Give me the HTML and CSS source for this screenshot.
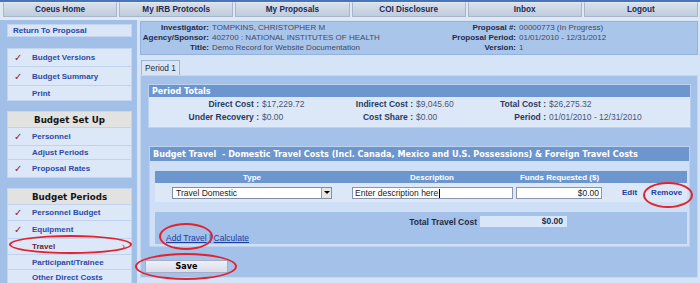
FILE: index.html
```html
<!DOCTYPE html>
<html lang="en">
<head>
<meta charset="utf-8">
<title>Budget Travel</title>
<link rel="stylesheet" href="styles.css">
</head>
<body>
<nav class="topnav">
  <a class="tab">Coeus Home</a>
  <a class="tab">My IRB Protocols</a>
  <a class="tab">My Proposals</a>
  <a class="tab">COI Disclosure</a>
  <a class="tab">Inbox</a>
  <a class="tab">Logout</a>
</nav>
<div class="page">
  <aside class="sidebar">
    <div class="sbox return"><a class="return-link">Return To Proposal</a></div>
    <div class="sbox">
      <a class="item check h17">Budget Versions</a>
      <a class="item check h19">Budget Summary</a>
      <a class="item h15">Print</a>
    </div>
    <div class="sbox">
      <div class="shead">Budget Set Up</div>
      <a class="item check h18">Personnel</a>
      <a class="item h14">Adjust Periods</a>
      <a class="item check h18">Proposal Rates</a>
    </div>
    <div class="sbox">
      <div class="shead">Budget Periods</div>
      <a class="item check h16">Personnel Budget</a>
      <a class="item check h18">Equipment</a>
      <a class="item current h16">Travel<span class="arrow">›</span></a>
      <a class="item h15">Participant/Trainee</a>
      <a class="item h16">Other Direct Costs</a>
    </div>
  </aside>
  <main class="main">
    <div class="info">
      <span class="lbl">Investigator:</span><span class="val">TOMPKINS, CHRISTOPHER M</span>
      <span class="lbl">Proposal #:</span><span class="val">00000773 (In Progress)</span>
      <span class="lbl">Agency/Sponsor:</span><span class="val">402700 : NATIONAL INSTITUTES OF HEALTH</span>
      <span class="lbl">Proposal Period:</span><span class="val">01/01/2010 - 12/31/2012</span>
      <span class="lbl">Title:</span><span class="val">Demo Record for Website Documentation</span>
      <span class="lbl">Version:</span><span class="val">1</span>
    </div>
    <div class="ptabs"><span class="ptab">Period 1</span></div>
    <div class="panel">
      <section class="totals">
        <h3 class="box-head">Period Totals</h3>
        <div class="totals-body">
          <span class="tl">Direct Cost :</span><span class="tv">$17,229.72</span>
          <span class="tl">Indirect Cost :</span><span class="tv">$9,045.60</span>
          <span class="tl">Total Cost :</span><span class="tv">$26,275.32</span>
          <span class="tl">Under Recovery :</span><span class="tv">$0.00</span>
          <span class="tl">Cost Share :</span><span class="tv">$0.00</span>
          <span class="tl">Period :</span><span class="tv">01/01/2010 - 12/31/2010</span>
        </div>
      </section>
      <section class="travel">
        <h3 class="box-head tall">Budget Travel&nbsp; - Domestic Travel Costs (Incl. Canada, Mexico and U.S. Possessions) &amp; Foreign Travel Costs</h3>
        <div class="travel-body">
          <div class="tgrid thead">
            <span>Type</span><span>Description</span><span>Funds Requested ($)</span><span></span>
          </div>
          <div class="tgrid trow">
            <div class="cell"><div class="select"><span class="sel-text">Travel Domestic</span><span class="sel-btn"><span class="tri"></span></span></div></div>
            <div class="cell"><div class="field desc">Enter description here<span class="caret"></span></div></div>
            <div class="cell"><div class="field funds">$0.00</div></div>
            <div class="actions"><a>Edit</a><a>Remove</a></div>
          </div>
          <div class="sum">
            <div class="sum-row"><span class="sum-lbl">Total Travel Cost</span><span class="sum-val">$0.00</span></div>
            <div class="links"><a>Add Travel</a> | <a>Calculate</a></div>
          </div>
        </div>
      </section>
      <button class="save">Save</button>
    </div>
  </main>
</div>
<div class="mark m-travel"></div>
<div class="mark m-add"></div>
<div class="mark m-save"></div>
<div class="mark m-remove"></div>
</body>
</html>
```
FILE: styles.css
```css
* { box-sizing: border-box; margin: 0; padding: 0; }
html, body { width: 700px; height: 283px; overflow: hidden; }
body {
  position: relative;
  background: #d5e4f7;
  font-family: "Liberation Sans", Arial, sans-serif;
  font-size: 8px;
  color: #1e2c4c;
}
a { cursor: pointer; }

/* top navigation */
.topnav {
  height: 20px;
  display: flex;
  gap: 2px;
  padding: 2px 2px 3px 3px;
  background: linear-gradient(#4774b9 0 2px, #dfe8f3 2px);
}
.tab {
  flex: 1;
  display: flex;
  align-items: center;
  justify-content: center;
  background: linear-gradient(#d8e0eb, #bfccdd);
  border: 1px solid #a7b6cb;
  border-top-color: #e4eaf2;
  font-weight: bold;
  font-size: 8.2px;
  color: #1c2a55;
}

.page { display: flex; height: 263px; }

/* sidebar */
.sidebar {
  width: 137px;
  flex: none;
  background: #a2bfe7;
  padding: 4px 5px 0 7px;
}
.sbox {
  background: #dce8f8;
  border: 1px solid #c3d6f0;
  margin-top: 10px;
}
.sbox.return { margin-top: 0; height: 13px; display: flex; align-items: center; padding-left: 5px; background: #dae6f7; }
.sbox.return + .sbox { margin-top: 11px; }
.return-link { font-weight: bold; color: #2444a3; }
.item {
  display: flex;
  align-items: center;
  padding-left: 24px;
  font-weight: bold;
  color: #2b48a6;
  border-top: 1px solid #c0d3ee;
}
.item:first-child { border-top: 0; }
.check { padding-left: 6px; }
.check::before {
  content: "✓";
  display: inline-block;
  width: 18px;
  font-family: "DejaVu Sans", sans-serif;
  font-size: 10px;
  font-weight: bold;
  color: #8c1d2d;
}
.h14 { height: 14px; } .h15 { height: 15px; } .h16 { height: 16px; }
.h17 { height: 17px; } .h18 { height: 18px; } .h19 { height: 19px; }
.current { color: #6e2433; justify-content: space-between; padding-right: 6px; }
.arrow { color: #8a8a8a; font-size: 10px; }
.shead {
  height: 15px;
  display: flex;
  align-items: center;
  justify-content: center;
  background: #e2e2e0;
  font-family: "DejaVu Sans", sans-serif;
  font-weight: bold;
  font-size: 8.7px;
  color: #141414;
}

/* main */
.main { flex: 1; padding: 1px 2px 0 3px; }
.info {
  height: 34px;
  background: #aac5ea;
  border: 1px solid #93b2de;
  padding-top: 1px;
  display: grid;
  grid-template-columns: 68px 231px 70px 1fr;
  column-gap: 3px;
  grid-auto-rows: 10px;
  line-height: 10px;
}
.info .lbl { text-align: right; font-weight: bold; color: #1d2b4b; }
.info .val { color: #3d4a68; white-space: nowrap; }

.ptabs { margin-top: 5px; height: 15px; display: flex; padding-left: 1px; }
.ptab {
  width: 39px;
  background: #dbe5f2;
  border: 1px solid #9cb7dc;
  border-bottom: 0;
  padding-left: 3px;
  line-height: 14px;
  font-size: 8.3px;
  color: #1e2a44;
}
.panel {
  height: 203px;
  background: #a4c1e9;
  border: 1px solid #c6d8f0;
  padding: 8px 6px 0 4px;
}
.box-head {
  height: 12px;
  display: flex;
  align-items: center;
  padding-left: 3px;
  background: #6d96cf;
  color: #fff;
  font-family: "DejaVu Sans", sans-serif;
  font-weight: bold;
  font-size: 8px;
  white-space: nowrap;
}
.box-head.tall { height: 14px; font-size: 8.1px; }

.totals { margin-left: 3px; border: 1px solid #bcd1ee; }
.totals-body {
  height: 30px;
  background: #dce8f8;
  padding-top: 1px;
  display: grid;
  grid-template-columns: 110px 80px 68px 80px 47px 1fr;
  column-gap: 3px;
  grid-auto-rows: 13px;
  line-height: 13px;
  font-size: 8.5px;
}
.tl { text-align: right; font-weight: bold; color: #2c3a58; white-space: nowrap; }
.tv { color: #4a5670; white-space: nowrap; }

.travel { margin: 18px 1px 0 4px; border: 1px solid #bcd1ee; }
.travel-body { background: #cfdff5; padding: 10px 2px 2px 5px; }
.tgrid { display: grid; grid-template-columns: 194px 166px 89px 1fr; }
.thead { height: 12px; background: #6d96cf; color: #fff; font-weight: bold; align-items: center; text-align: center; }
.trow { height: 19px; background: #dce8f8; align-items: center; font-size: 8.5px; }
.select {
  width: 160px;
  height: 12px;
  margin: 0 auto;
  display: flex;
  background: #fff;
  border: 1px solid #7d8ea6;
}
.sel-text { flex: 1; padding-left: 3px; line-height: 10px; color: #222; }
.sel-btn {
  width: 10px;
  background: #e6e6e6;
  border-left: 1px solid #9a9a9a;
  display: flex;
  align-items: center;
  justify-content: center;
}
.tri { width: 0; height: 0; border-left: 3px solid transparent; border-right: 3px solid transparent; border-top: 3px solid #000; }
.field {
  height: 12px;
  background: #fff;
  border: 1px solid #8796ad;
  line-height: 10px;
  padding: 0 2px;
  color: #222;
}
.desc { width: 161px; margin-left: 3px; }
.funds { width: 86px; margin-left: 1px; text-align: right; }
.caret { display: inline-block; width: 1px; height: 9px; background: #000; vertical-align: middle; margin-left: 1px; }
.actions { display: flex; gap: 14px; padding-left: 18px; font-weight: bold; font-size: 8px; color: #233f9a; }

.sum { margin-top: 10px; height: 32px; background: #a4c1e9; padding-top: 4px; }
.sum-row { display: flex; height: 11px; align-items: center; }
.sum-lbl { width: 322px; text-align: right; font-weight: bold; font-size: 8.5px; color: #1f2b47; }
.sum-val {
  width: 87px;
  height: 11px;
  margin-left: 3px;
  background: #d9e6f8;
  text-align: right;
  padding-right: 4px;
  line-height: 11px;
  font-weight: bold;
  font-size: 8.5px;
  color: #1f2b47;
}
.links { margin-top: 6px; padding-left: 11px; font-size: 8.5px; color: #1b3ea0; line-height: 10px; }
.links a { text-decoration: underline; }

.save {
  display: block;
  margin-top: 13px;
  width: 83px;
  height: 13px;
  background: linear-gradient(#eef0f7, #d9dcea);
  border: 1px solid #a6adc6;
  font-family: "DejaVu Sans", sans-serif;
  font-weight: bold;
  font-size: 8px;
  color: #000;
}

/* red annotation ellipses drawn over the screenshot */
.mark { position: absolute; border: 2px solid #e2232e; border-radius: 50%; }
.m-travel { left: 9px; top: 235px; width: 123px; height: 19px; }
.m-add { left: 159px; top: 223px; width: 54px; height: 27px; }
.m-save { left: 135px; top: 253px; width: 102px; height: 27px; }
.m-remove { left: 643px; top: 182px; width: 50px; height: 26px; }
```
